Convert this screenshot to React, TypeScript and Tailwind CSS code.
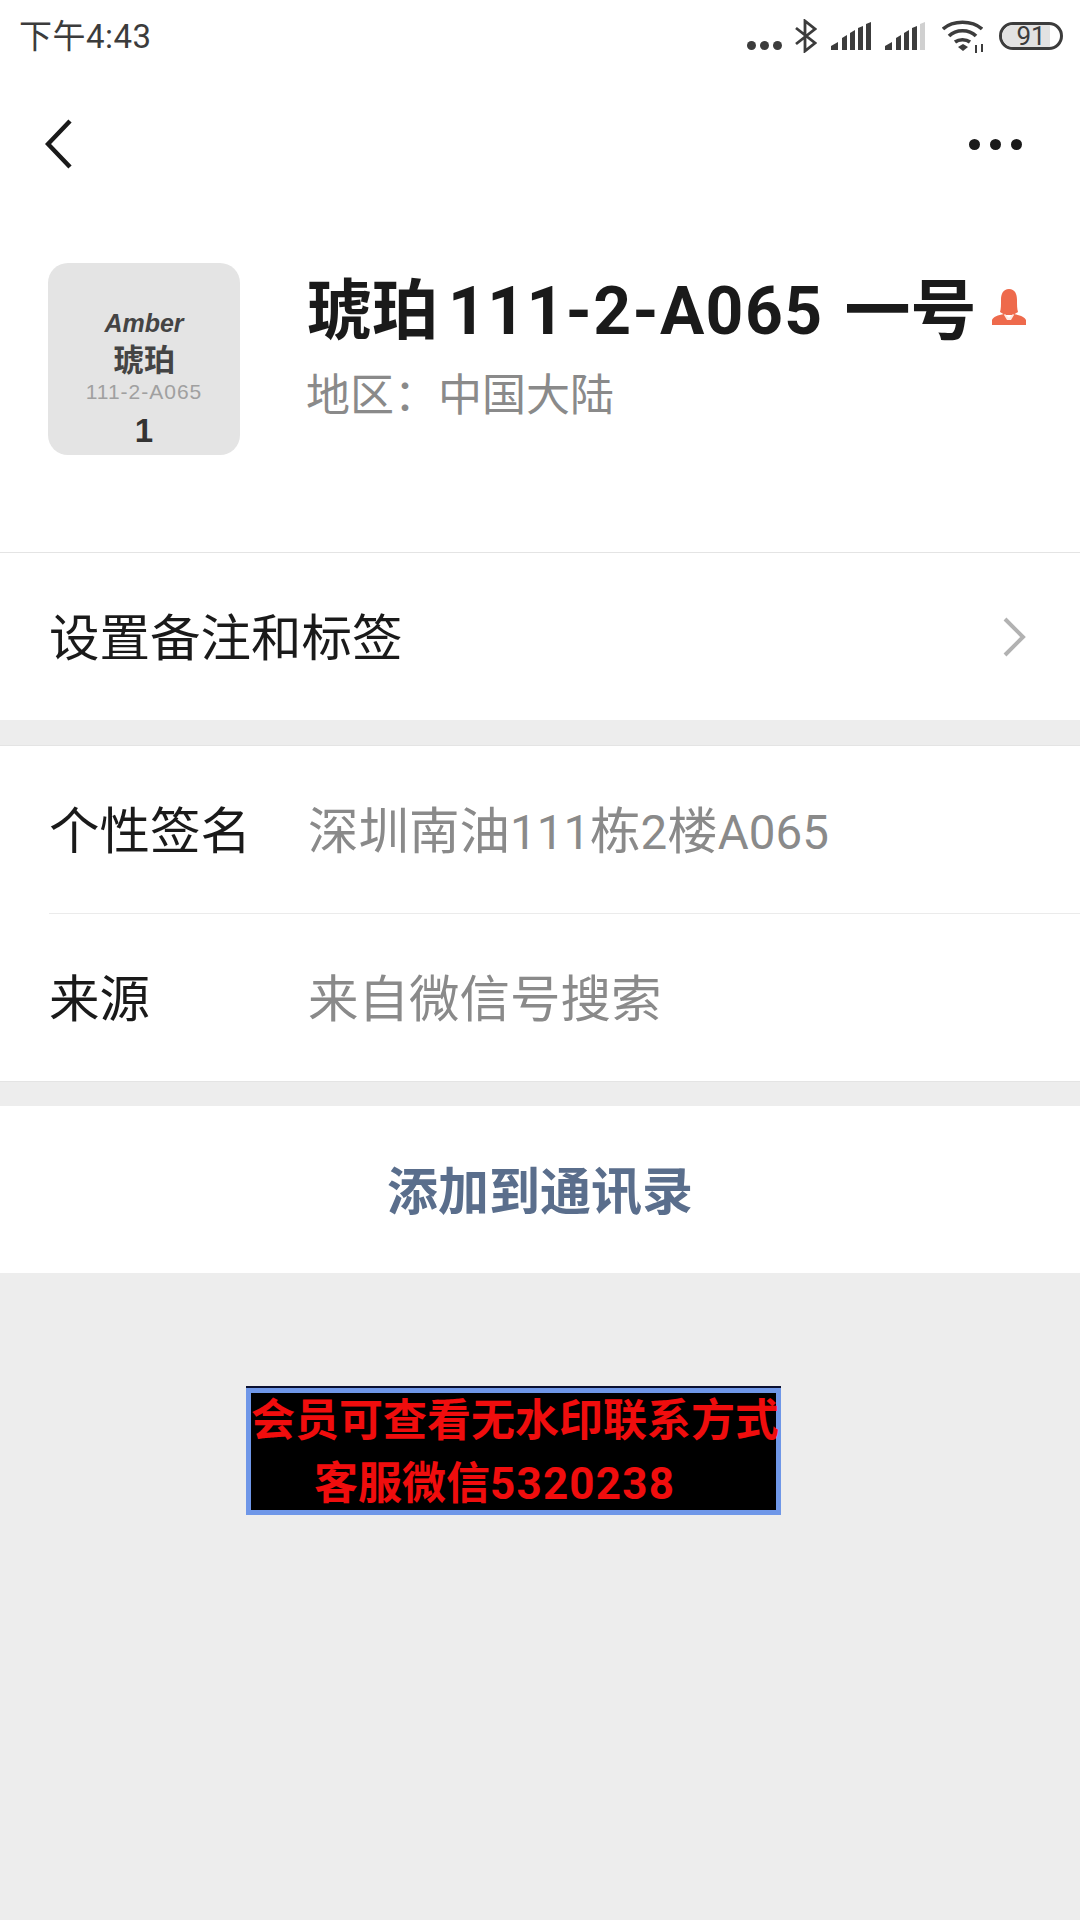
import type { ReactNode } from 'react';

const CJK = "font-['Roboto','Noto_Sans_CJK_SC',sans-serif]";

function Signal({ weak }: { weak?: boolean }) {
  return (
    <svg width="40" height="28" viewBox="0 0 40 28" className="ml-[14px]" fill="#3c3c3c">
      <path d="M0 28 V24 L7 20 V28 Z" />
      <path d="M11 28 V16 L16 13 V28 Z" />
      <path d="M19 28 V11 L24 8 V28 Z" />
      <path d="M27 28 V6 L32 4 V28 Z" />
      <path d="M35 28 V2 L40 0 V28 Z" fill={weak ? '#d0d0d0' : '#3c3c3c'} />
    </svg>
  );
}

function StatusIcons() {
  return (
    <div className="flex items-center">
      {/* three dots */}
      <div className="flex gap-[4px] mt-[18px]">
        <div className="w-[9px] h-[9px] rounded-full bg-[#3c3c3c]" />
        <div className="w-[9px] h-[9px] rounded-full bg-[#3c3c3c]" />
        <div className="w-[9px] h-[9px] rounded-full bg-[#3c3c3c]" />
      </div>
      {/* bluetooth */}
      <svg width="22" height="34" viewBox="0 0 22 34" className="ml-[13px]" fill="none" stroke="#3c3c3c" strokeWidth="2.8">
        <path d="M1 9 L20 24 L10 32 V2 L20 10 L1 25" />
      </svg>
      <Signal />
      <Signal weak />
      {/* wifi */}
      <svg width="41" height="33" viewBox="0 0 41 33" className="ml-[17px]" fill="none" stroke="#3c3c3c" strokeWidth="3.6">
        <path d="M1 9 C11 0 30 0 40 9" />
        <path d="M7 16 C14 9 27 9 34 16" />
        <path d="M13 22 C17 19 24 19 28 22" />
        <path d="M16 27 L21 24 L26 27 L21 31 Z" fill="#3c3c3c" stroke="none" />
        <path d="M34 25 V33 M40 24 V32" strokeWidth="2" />
      </svg>
      {/* battery */}
      <div className="ml-[16px] w-[64px] h-[28px] rounded-full border-[3px] border-[#3c3c3c] bg-white flex items-center overflow-hidden relative">
        <div className="w-[48px] h-full bg-[#e2e2e2] rounded-l-full" />
        <span className="absolute inset-0 flex items-center justify-center text-[26px] leading-none text-[#3c3c3c] font-['Roboto',sans-serif]">91</span>
      </div>
    </div>
  );
}

function Avatar() {
  return (
    <div className={`w-[192px] h-[192px] rounded-[20px] bg-[#e4e4e4] flex flex-col items-center shrink-0 ${CJK}`}>
      <div className="mt-[48px] text-[25px] leading-[24px] font-bold italic text-[#444] font-['Liberation_Sans',sans-serif]">Amber</div>
      <div className="mt-[10px] text-[31px] leading-[32px] font-bold text-[#444]">琥珀</div>
      <div className="mt-[5px] text-[21px] leading-[20px] tracking-[1px] text-[#a0a0a0] font-['Liberation_Sans',sans-serif]">111-2-A065</div>
      <div className="mt-[14px] text-[33px] leading-[30px] font-bold text-[#333] font-['Liberation_Sans',sans-serif]">1</div>
    </div>
  );
}

function Row({ label, children }: { label: string; children: ReactNode }) {
  return (
    <div className="h-[167px] flex items-center">
      <span className="w-[259px] pt-[6px] text-[50.5px] leading-none text-[#1a1a1a]">{label}</span>
      <span className="pt-[6px] text-[50.5px] leading-none text-[#8a8a8a] whitespace-nowrap">{children}</span>
    </div>
  );
}

export default function App() {
  return (
    <div className={`w-[1080px] h-[1920px] bg-[#ededed] overflow-hidden flex flex-col ${CJK}`}>
      {/* status bar + header + profile */}
      <div className="bg-white h-[552px] shrink-0 flex flex-col">
        <div className="h-[72px] pl-[19px] pr-[17px] flex items-center justify-between">
          <span className="text-[33px] leading-none tracking-[0.5px] text-[#3c3c3c]">下午4:43</span>
          <StatusIcons />
        </div>
        <div className="h-[72px] mt-[36px] pl-[45px] pr-[58px] flex items-center justify-between">
          <svg width="27" height="50" viewBox="0 0 27 50" fill="none" stroke="#1a1a1a" strokeWidth="4.5">
            <path d="M25 2 L3 25 L25 48" />
          </svg>
          <div className="flex gap-[10px]">
            <div className="w-[11px] h-[11px] rounded-full bg-[#1a1a1a]" />
            <div className="w-[11px] h-[11px] rounded-full bg-[#1a1a1a]" />
            <div className="w-[11px] h-[11px] rounded-full bg-[#1a1a1a]" />
          </div>
        </div>
        <div className="mt-[83px] pl-[48px] flex">
          <Avatar />
          <div className="ml-[66px] flex flex-col">
            <div className="flex items-center h-[97px]">
              <span className="text-[66px] leading-none font-bold text-[#1a1a1a] whitespace-nowrap">
                琥珀
                <span className="ml-[10px] tracking-[1.4px]">111-2-A065</span>
                <span className="ml-[21px]">一号</span>
              </span>
              <svg width="34" height="36" viewBox="0 0 34 36" className="ml-[16px] mb-[10px]">
                <path fill="#ee6a4c" d="M17 0 C23 0 25 5 25 11 C25 16 25 20 26 23 L21 26 H13 L8 23 C9 20 9 16 9 11 C9 5 11 0 17 0 Z" />
                <path fill="#ee6a4c" d="M0 36 V31 C1 28 6 26 12 25 L17 30 L22 25 C28 26 33 28 34 31 V36 Z" />
                <path fill="#ffe9e2" d="M13 25 L17 29 L21 25 L22 26 L19 31 H15 L12 26 Z" />
              </svg>
            </div>
            <span className="mt-[14px] text-[44px] leading-none text-[#8a8a8a] whitespace-nowrap">{'地区\uFF1A中国大陆'}</span>
          </div>
        </div>
      </div>

      <div className="bg-white h-[168px] shrink-0 border-t border-[#e4e4e4] pl-[49px] pr-[54px] flex items-center justify-between">
        <span className="pt-[6px] text-[50.5px] leading-none text-[#1a1a1a]">设置备注和标签</span>
        <svg width="24" height="42" viewBox="0 0 24 42" fill="none" stroke="#b2b2b2" strokeWidth="4">
          <path d="M3 3 L21 21 L3 39" />
        </svg>
      </div>

      <div className="bg-white mt-[25px] shrink-0 border-y border-[#e4e4e4] pl-[49px]">
        <Row label="个性签名">
          深圳南油<span className="text-[47.5px]">111</span>栋<span className="text-[47.5px]">2</span>楼<span className="text-[47.5px]">A065</span>
        </Row>
        <div className="h-px bg-[#ebebeb]" />
        <Row label="来源">来自微信号搜索</Row>
      </div>

      <div className="bg-white mt-[24px] h-[167px] shrink-0 flex items-center justify-center">
        <span className="pt-[5px] text-[51px] leading-none font-bold text-[#5a6e8c]">添加到通讯录</span>
      </div>

      {/* watermark notice */}
      <div className="ml-[246px] mt-[115px] w-[535px] h-[127px] bg-black border-[5px] border-[#6f97e8] shadow-[0_-2px_0_#0a1030] flex flex-col shrink-0 text-[#f00d0d] font-bold">
        <span className="pt-[5px] text-[44px] leading-[46px] whitespace-nowrap">会员可查看无水印联系方式</span>
        <span className="pl-[63px] mt-[17px] text-[44px] leading-[46px] whitespace-nowrap">
          客服微信<span className="tracking-[1.2px]">5320238</span>
        </span>
      </div>
    </div>
  );
}
